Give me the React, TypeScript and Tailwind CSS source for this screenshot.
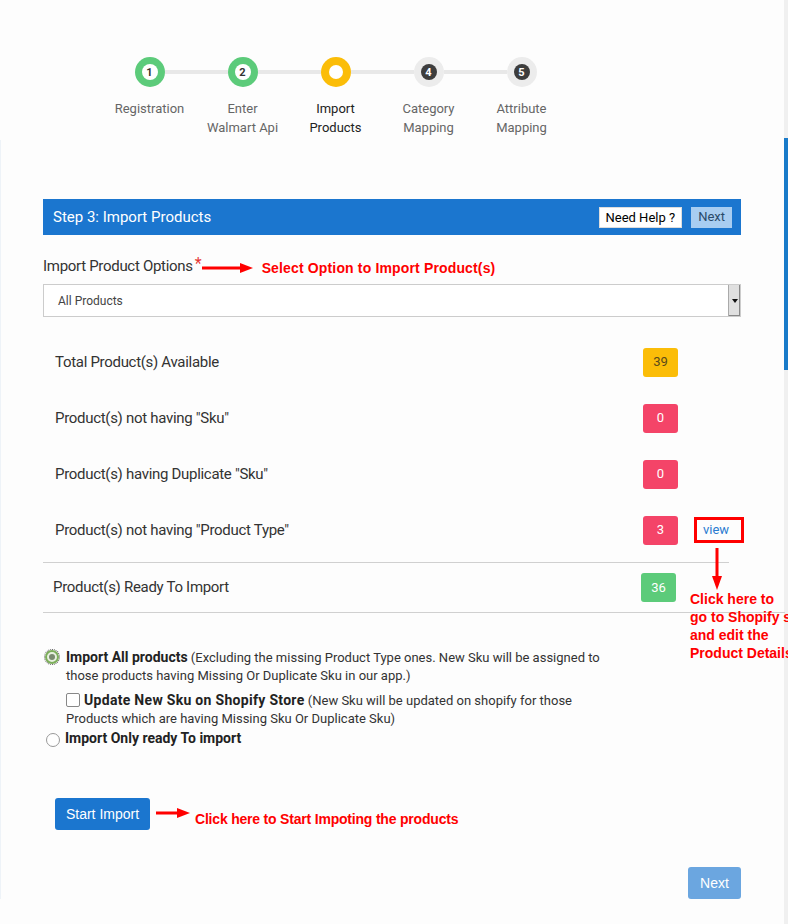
import React from "react";

interface IStep {
  label: string[];
  num: number;
  state: "done" | "active" | "todo";
}

interface IStatRow {
  label: string;
  count: number;
  color: string;
  view?: boolean;
}

const steps: IStep[] = [
  { label: ["Registration"], num: 1, state: "done" },
  { label: ["Enter", "Walmart Api"], num: 2, state: "done" },
  { label: ["Import", "Products"], num: 3, state: "active" },
  { label: ["Category", "Mapping"], num: 4, state: "todo" },
  { label: ["Attribute", "Mapping"], num: 5, state: "todo" },
];

const statRows: IStatRow[] = [
  { label: "Total Product(s) Available", count: 39, color: "bg-[#fbbd08] text-[#5a4a1a]" },
  { label: 'Product(s) not having "Sku"', count: 0, color: "bg-[#f44468] text-white" },
  { label: 'Product(s) having Duplicate "Sku"', count: 0, color: "bg-[#f44468] text-white" },
  { label: 'Product(s) not having "Product Type"', count: 3, color: "bg-[#f44468] text-white", view: true },
];

const ArrowRight = ({ width }: { width: number }) => (
  <svg width={width} height="10" viewBox={`0 0 ${width} 10`}>
    <rect x="0" y="3.5" width={width - 12} height="3" fill="#ff0000" />
    <polygon points={`${width - 13},0 ${width},5 ${width - 13},10`} fill="#ff0000" />
  </svg>
);

const ArrowDown = () => (
  <svg width="10" height="42" viewBox="0 0 10 42">
    <rect x="3.5" y="0" width="3" height="30" fill="#ff0000" />
    <polygon points="0,28 10,28 5,42" fill="#ff0000" />
  </svg>
);

const StepCircle = ({ step }: { step: IStep }) => {
  if (step.state === "active") {
    return (
      <div className="w-[30px] h-[30px] rounded-full bg-[#fbbd08] flex items-center justify-center shrink-0">
        <div className="w-[14px] h-[14px] rounded-full bg-white" />
      </div>
    );
  }
  const outer = step.state === "done" ? "bg-[#5ccb7a]" : "bg-[#ececec]";
  const inner = step.state === "done" ? "bg-white text-[#333]" : "bg-[#3d3d3d] text-white";
  return (
    <div className={`w-[30px] h-[30px] rounded-full ${outer} flex items-center justify-center shrink-0`}>
      <div className={`w-[16px] h-[16px] rounded-full ${inner} flex items-center justify-center text-[11px] font-bold leading-none`}>
        {step.num}
      </div>
    </div>
  );
};

const App = () => {
  return (
    <div className="flex w-[788px] min-h-[924px] overflow-hidden bg-[#fdfdfd] font-['Roboto',sans-serif] text-[#333]">
      <div className="flex-1 flex flex-col">
        {/* stepper */}
        <div className="flex ml-[103px] mt-[57px]">
          {steps.map((step, index) => (
            <div key={index} className="w-[93px] flex flex-col items-center">
              <div className="w-full flex items-center">
                <div className={`flex-1 h-[4px] ${index === 0 ? "" : "bg-[#e8e8e8]"}`} />
                <StepCircle step={step} />
                <div className={`flex-1 h-[4px] ${index === steps.length - 1 ? "" : "bg-[#e8e8e8]"}`} />
              </div>
              <div
                className={`mt-[12px] text-[13px] leading-[19px] text-center ${
                  step.state === "active" ? "text-[#222]" : "text-[#666]"
                }`}
              >
                {step.label.map((line, i) => (
                  <div key={i}>{line}</div>
                ))}
              </div>
            </div>
          ))}
        </div>

        <div className="flex border-l border-[#eef3f8] mt-[3px]">
          <div className="ml-[42px] w-[698px] pt-[59px]">
            {/* header */}
            <div className="h-[36px] bg-[#1b76cf] flex items-center justify-between pl-[10px] pr-[9px]">
              <span className="text-white text-[15px]">Step 3: Import Products</span>
              <div className="flex items-center gap-[9px]">
                <button className="bg-white text-black text-[13px] h-[21px] px-[6px] border border-[#ddd]">
                  Need Help ?
                </button>
                <button className="bg-[#a8cdf1] text-[#2a4a6a] text-[13px] h-[21px] px-[7px]">Next</button>
              </div>
            </div>

            {/* options */}
            <div className="mt-[22px] flex items-center h-[18px]">
              <span className="text-[15px] tracking-[-0.3px]">Import Product Options</span>
              <span className="text-[#e53935] ml-[2px] -mt-[4px]">*</span>
              <span className="mt-[3px]">
                <ArrowRight width={51} />
              </span>
              <span className="ml-[9px] mt-[4px] text-[#ff0000] font-bold text-[14px] tracking-[0.15px] font-['Liberation_Sans',sans-serif]">
                Select Option to Import Product(s)
              </span>
            </div>

            <div className="mt-[9px] h-[33px] border border-[#ccc] flex items-center justify-between bg-white">
              <span className="ml-[14px] text-[12px] text-[#444]">All Products</span>
              <div className="w-[12px] h-full bg-[#e0e0e0] border-l border-[#aaa] flex items-center justify-center shadow-[inset_-1px_-1px_0_#888]">
                <svg width="6" height="4" viewBox="0 0 6 4">
                  <polygon points="0,0 6,0 3,4" fill="#111" />
                </svg>
              </div>
            </div>

            {/* stats */}
            <div className="mt-[17px] flex flex-col">
              {statRows.map((row, index) => (
                <div key={index} className="h-[56px] flex items-center">
                  <span className="ml-[12px] w-[588px] shrink-0 text-[15px] tracking-[-0.3px]">{row.label}</span>
                  <span
                    className={`w-[35px] h-[29px] shrink-0 rounded-[3px] flex items-center justify-center text-[13px] ${row.color}`}
                  >
                    {row.count}
                  </span>
                  {row.view && (
                    <span className="ml-[16px] w-[50px] h-[26px] shrink-0 border-[3px] border-[#ff0000] flex items-center pl-[6px] text-[13px] text-[#2a7bd0]">
                      view
                    </span>
                  )}
                </div>
              ))}
            </div>

            <div className="relative">
              <div className="w-[686px] h-px bg-[#d0d0d0] mt-[4px]" />
              <div className="h-[49px] flex items-center">
                <span className="ml-[10px] w-[588px] shrink-0 text-[15px] tracking-[-0.3px]">Product(s) Ready To Import</span>
                <span className="w-[35px] h-[29px] shrink-0 rounded-[3px] flex items-center justify-center text-[13px] bg-[#5ccb7a] text-white">
                  36
                </span>
              </div>
              <div className="w-[742px] h-px bg-[#d0d0d0]" />

              {/* annotation overlay */}
              <div className="absolute left-[647px] top-[-14px] w-[120px] flex flex-col">
                <div className="ml-[22px]">
                  <ArrowDown />
                </div>
                <div className="mt-0 text-[#ff0000] font-bold text-[14px] leading-[18px] whitespace-nowrap font-['Liberation_Sans',sans-serif]">
                  Click here to
                  <br />
                  go to Shopify store
                  <br />
                  and edit the
                  <br />
                  Product Details
                </div>
              </div>
            </div>

            {/* import choices */}
            <div className="mt-[35px] text-[13px] leading-[18px] text-[#333] w-[572px]">
              <div className="flex">
                <span className="mt-[2px] w-[14px] h-[14px] rounded-full border-2 border-[#7cae5a] bg-[#e8f0e0] flex items-center justify-center shrink-0 outline-1 outline-dotted outline-[#555] ml-[2px]">
                  <span className="w-[6px] h-[6px] rounded-full bg-[#7a8a70]" />
                </span>
                <div className="ml-[7px]">
                  <span className="font-bold text-[14px] text-[#222]">Import All products</span> (Excluding the missing
                  Product Type ones. New Sku will be assigned to those products having Missing Or Duplicate Sku in our
                  app.)
                </div>
              </div>
              <div className="ml-[23px] mt-[6px]">
                <span className="inline-block align-[-2px] w-[14px] h-[14px] rounded-[2px] border border-[#888] bg-white mr-[4px]" />
                <span className="font-bold text-[14px] text-[#222] tracking-[0.3px]">Update New Sku on Shopify Store</span>{" "}
                (New Sku will be updated on shopify for those Products which are having Missing Sku Or Duplicate Sku)
              </div>
              <div className="flex items-start mt-[1px]">
                <span className="mt-[4px] ml-[3px] w-[14px] h-[14px] rounded-full border border-[#999] bg-white shrink-0" />
                <span className="ml-[5px] font-bold text-[14px] text-[#222]">Import Only ready To import</span>
              </div>
            </div>

            {/* start import */}
            <div className="mt-[51px] ml-[12px] flex items-center">
              <button className="w-[95px] h-[32px] bg-[#1b76cf] rounded-[3px] text-white text-[14px] font-['Liberation_Sans',sans-serif]">
                Start Import
              </button>
              <span className="ml-[6px] mt-[-2px]">
                <ArrowRight width={34} />
              </span>
              <span className="ml-[5px] mt-[11px] text-[#ff0000] font-bold text-[14px] tracking-[-0.2px] font-['Liberation_Sans',sans-serif]">
                Click here to Start Impoting the products
              </span>
            </div>

            <div className="mt-[37px] flex justify-end">
              <button className="w-[53px] h-[32px] bg-[#6ba6e0] rounded-[3px] text-white text-[14px] font-['Liberation_Sans',sans-serif]">
                Next
              </button>
            </div>
          </div>
        </div>
      </div>

      {/* right scroll strip */}
      <div className="w-[4px] bg-[#f0f0f0] flex flex-col">
        <div className="mt-[138px] h-[232px] bg-[#1a7bc9]" />
      </div>
    </div>
  );
};

export default App;
